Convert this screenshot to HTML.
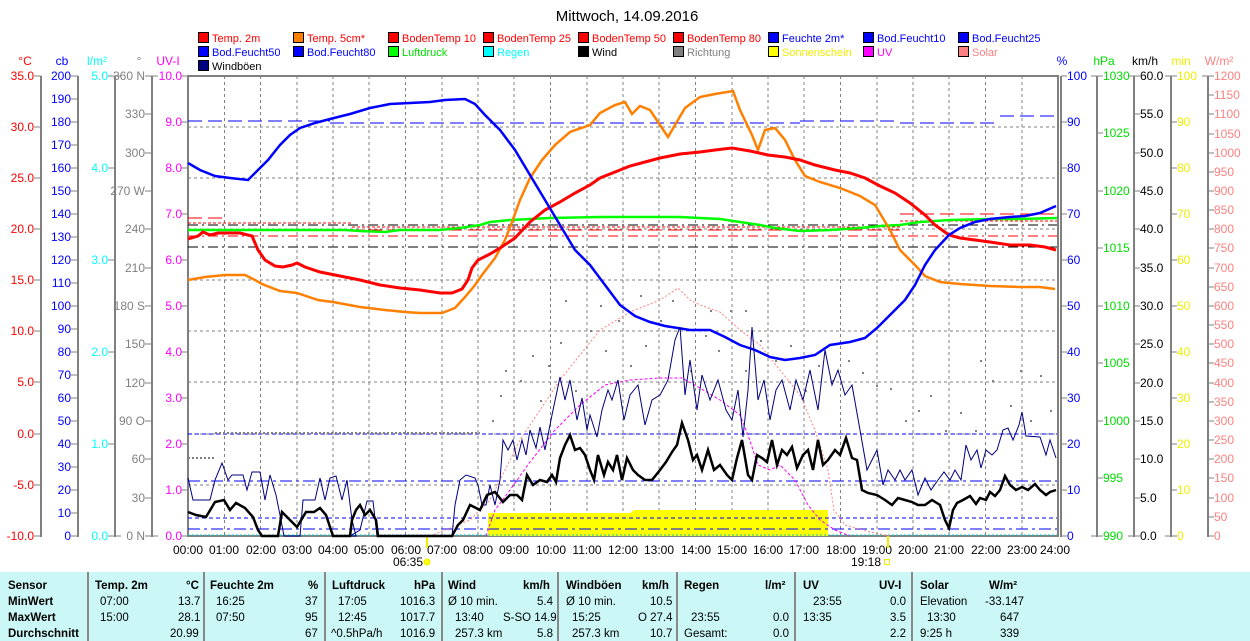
<!DOCTYPE html>
<html><head><meta charset="utf-8"><style>
html,body{margin:0;padding:0;background:#fff;width:1250px;height:641px;overflow:hidden}
svg{display:block}
text{font-family:"Liberation Sans",sans-serif;font-size:12px}
.lg text{font-size:11px}
.tb{position:absolute;left:0;top:572px;width:1250px;height:69px;background:#ccf7f7;font-family:"Liberation Sans Narrow","Liberation Sans",sans-serif;font-size:11.5px;color:#000}
.tb div{position:absolute;white-space:nowrap}
.b{font-weight:bold}
.sep{width:2px;background:#888;top:0;height:69px}
</style></head><body>
<svg width="1250" height="572" viewBox="0 0 1250 572" style="position:absolute;left:0;top:0">
<text x="627" y="21" font-size="15" text-anchor="middle" style="font-size:15px">Mittwoch, 14.09.2016</text>
<!-- legend -->
<g stroke="#000" stroke-width="1">
<rect x="198.5" y="32.5" width="10" height="10" fill="#f00"/><rect x="293.5" y="32.5" width="10" height="10" fill="#ff8000"/><rect x="388.5" y="32.5" width="10" height="10" fill="#f00"/><rect x="483.5" y="32.5" width="10" height="10" fill="#f00"/><rect x="578.5" y="32.5" width="10" height="10" fill="#f00"/><rect x="673.5" y="32.5" width="10" height="10" fill="#f00"/><rect x="768.5" y="32.5" width="10" height="10" fill="#00f"/><rect x="863.5" y="32.5" width="10" height="10" fill="#00f"/><rect x="958.5" y="32.5" width="10" height="10" fill="#00f"/>
<rect x="198.5" y="46.5" width="10" height="10" fill="#00f"/><rect x="293.5" y="46.5" width="10" height="10" fill="#00f"/><rect x="388.5" y="46.5" width="10" height="10" fill="#0f0"/><rect x="483.5" y="46.5" width="10" height="10" fill="#0ff"/><rect x="578.5" y="46.5" width="10" height="10" fill="#000"/><rect x="673.5" y="46.5" width="10" height="10" fill="#808080"/><rect x="768.5" y="46.5" width="10" height="10" fill="#ff0"/><rect x="863.5" y="46.5" width="10" height="10" fill="#f0f"/><rect x="958.5" y="46.5" width="10" height="10" fill="#ff8080"/>
<rect x="198.5" y="60.5" width="10" height="10" fill="#000080"/>
</g>
<g class="lg">
<text x="212" y="42" fill="#f00">Temp. 2m</text><text x="307" y="42" fill="#f00">Temp. 5cm*</text><text x="402" y="42" fill="#f00">BodenTemp 10</text><text x="497" y="42" fill="#f00">BodenTemp 25</text><text x="592" y="42" fill="#f00">BodenTemp 50</text><text x="687" y="42" fill="#f00">BodenTemp 80</text><text x="782" y="42" fill="#00f">Feuchte 2m*</text><text x="877" y="42" fill="#00f">Bod.Feucht10</text><text x="972" y="42" fill="#00f">Bod.Feucht25</text>
<text x="212" y="56" fill="#00f">Bod.Feucht50</text><text x="307" y="56" fill="#00f">Bod.Feucht80</text><text x="402" y="56" fill="#0d0">Luftdruck</text><text x="497" y="56" fill="#0ff">Regen</text><text x="592" y="56" fill="#000">Wind</text><text x="687" y="56" fill="#808080">Richtung</text><text x="782" y="56" fill="#ee0">Sonnenschein</text><text x="877" y="56" fill="#f0f">UV</text><text x="972" y="56" fill="#ff8080">Solar</text>
<text x="212" y="70" fill="#000">Windböen</text>
</g>
<!-- axis headers -->
<text x="25" y="65" fill="#f00" text-anchor="middle">°C</text>
<text x="62" y="65" fill="#00f" text-anchor="middle">cb</text>
<text x="97" y="65" fill="#0ff" text-anchor="middle">l/m²</text>
<text x="139" y="65" fill="#808080" text-anchor="middle">°</text>
<text x="168" y="65" fill="#f0f" text-anchor="middle">UV-I</text>
<text x="1062" y="65" fill="#00f" text-anchor="middle">%</text>
<text x="1104" y="65" fill="#0d0" text-anchor="middle">hPa</text>
<text x="1145" y="65" fill="#000" text-anchor="middle">km/h</text>
<text x="1181" y="65" fill="#ee0" text-anchor="middle">min</text>
<text x="1219" y="65" fill="#ff8080" text-anchor="middle">W/m²</text>
<!-- axis lines -->
<g stroke="#808080" stroke-width="2">
<line x1="41" y1="76" x2="41" y2="537"/><line x1="78" y1="76" x2="78" y2="537"/><line x1="115" y1="76" x2="115" y2="537"/><line x1="152" y1="76" x2="152" y2="537"/>
<line x1="1097" y1="76" x2="1097" y2="537"/><line x1="1134" y1="76" x2="1134" y2="537"/><line x1="1171" y1="76" x2="1171" y2="537"/><line x1="1208" y1="76" x2="1208" y2="537"/>
</g>
<!-- grid -->
<g stroke="#808080" stroke-width="1" stroke-dasharray="3,3">
<line x1="224.5" y1="76" x2="224.5" y2="536"/><line x1="260.5" y1="76" x2="260.5" y2="536"/><line x1="297" y1="76" x2="297" y2="536"/><line x1="333" y1="76" x2="333" y2="536"/><line x1="369" y1="76" x2="369" y2="536"/><line x1="405.5" y1="76" x2="405.5" y2="536"/><line x1="442" y1="76" x2="442" y2="536"/><line x1="478" y1="76" x2="478" y2="536"/><line x1="514" y1="76" x2="514" y2="536"/><line x1="550.5" y1="76" x2="550.5" y2="536"/><line x1="587" y1="76" x2="587" y2="536"/><line x1="623" y1="76" x2="623" y2="536"/><line x1="659" y1="76" x2="659" y2="536"/><line x1="695.5" y1="76" x2="695.5" y2="536"/><line x1="732" y1="76" x2="732" y2="536"/><line x1="768" y1="76" x2="768" y2="536"/><line x1="804" y1="76" x2="804" y2="536"/><line x1="840.5" y1="76" x2="840.5" y2="536"/><line x1="877" y1="76" x2="877" y2="536"/><line x1="913" y1="76" x2="913" y2="536"/><line x1="949" y1="76" x2="949" y2="536"/><line x1="985.5" y1="76" x2="985.5" y2="536"/><line x1="1022" y1="76" x2="1022" y2="536"/>
<line x1="188" y1="127" x2="1057" y2="127"/><line x1="188" y1="178" x2="1057" y2="178"/><line x1="188" y1="229" x2="1057" y2="229"/><line x1="188" y1="280" x2="1057" y2="280"/><line x1="188" y1="331" x2="1057" y2="331"/><line x1="188" y1="382" x2="1057" y2="382"/><line x1="188" y1="434" x2="1057" y2="434"/><line x1="188" y1="485" x2="1057" y2="485"/>
</g>
<!-- plot border -->
<rect x="188" y="76" width="870" height="460" fill="none" stroke="#808080" stroke-width="2"/>
<line x1="1061" y1="76" x2="1061" y2="537" stroke="#808080" stroke-width="2"/>
<!-- ticks -->
<g stroke="#808080" stroke-width="1">
<path d="M34 76H41M34 127H41M34 178H41M34 229H41M34 280H41M34 331H41M34 382H41M34 434H41M34 485H41M34 536H41"/>
<path d="M71 76H78M71 99H78M71 122H78M71 145H78M71 168H78M71 191H78M71 214H78M71 237H78M71 260H78M71 283H78M71 306H78M71 329H78M71 352H78M71 375H78M71 398H78M71 421H78M71 444H78M71 467H78M71 490H78M71 513H78M71 536H78"/>
<path d="M108 76H121M108 168H115M108 260H115M108 352H115M108 444H115M108 536H121"/>
<path d="M145 76H158M145 114H152M145 153H152M145 191H152M145 229H152M145 268H152M145 306H152M145 344H152M145 383H152M145 421H152M145 459H152M145 498H152M145 536H158"/>
<path d="M181 76H188M181 122H188M181 168H188M181 214H188M181 260H188M181 306H188M181 352H188M181 398H188M181 444H188M181 490H188M181 536H188"/>
<path d="M1061 76H1067M1061 122H1067M1061 168H1067M1061 214H1067M1061 260H1067M1061 306H1067M1061 352H1067M1061 398H1067M1061 444H1067M1061 490H1067M1061 536H1067"/>
<path d="M1091 76H1103M1097 133H1103M1097 191H1103M1097 248H1103M1097 306H1103M1097 363H1103M1097 421H1103M1097 478H1103M1091 536H1103"/>
<path d="M1128 76H1140M1134 114H1140M1134 153H1140M1134 191H1140M1134 229H1140M1134 268H1140M1134 306H1140M1134 344H1140M1134 383H1140M1134 421H1140M1134 459H1140M1134 498H1140M1128 536H1140"/>
<path d="M1165 76H1177M1171 122H1177M1171 168H1177M1171 214H1177M1171 260H1177M1171 306H1177M1171 352H1177M1171 398H1177M1171 444H1177M1171 490H1177M1165 536H1177"/>
<path d="M1202 76H1214M1208 95H1214M1208 114H1214M1208 134H1214M1208 153H1214M1208 172H1214M1208 191H1214M1208 210H1214M1208 229H1214M1208 248H1214M1208 268H1214M1208 287H1214M1208 306H1214M1208 325H1214M1208 344H1214M1208 363H1214M1208 383H1214M1208 402H1214M1208 421H1214M1208 440H1214M1208 459H1214M1208 478H1214M1208 498H1214M1208 517H1214M1208 536H1214"/>
</g>
<g fill="#f00" text-anchor="end"><text x="34" y="80">35.0</text><text x="34" y="131">30.0</text><text x="34" y="182">25.0</text><text x="34" y="233">20.0</text><text x="34" y="284">15.0</text><text x="34" y="335">10.0</text><text x="34" y="386">5.0</text><text x="34" y="438">0.0</text><text x="34" y="489">-5.0</text><text x="34" y="540">-10.0</text></g>
<g fill="#00f" text-anchor="end"><text x="71" y="80">200</text><text x="71" y="103">190</text><text x="71" y="126">180</text><text x="71" y="149">170</text><text x="71" y="172">160</text><text x="71" y="195">150</text><text x="71" y="218">140</text><text x="71" y="241">130</text><text x="71" y="264">120</text><text x="71" y="287">110</text><text x="71" y="310">100</text><text x="71" y="333">90</text><text x="71" y="356">80</text><text x="71" y="379">70</text><text x="71" y="402">60</text><text x="71" y="425">50</text><text x="71" y="448">40</text><text x="71" y="471">30</text><text x="71" y="494">20</text><text x="71" y="517">10</text><text x="71" y="540">0</text></g>
<g fill="#0ff" text-anchor="end"><text x="108" y="80">5.0</text><text x="108" y="172">4.0</text><text x="108" y="264">3.0</text><text x="108" y="356">2.0</text><text x="108" y="448">1.0</text><text x="108" y="540">0.0</text></g>
<g fill="#808080" text-anchor="end"><text x="145" y="80">360 N</text><text x="145" y="118">330</text><text x="145" y="157">300</text><text x="145" y="195">270 W</text><text x="145" y="233">240</text><text x="145" y="272">210</text><text x="145" y="310">180 S</text><text x="145" y="348">150</text><text x="145" y="387">120</text><text x="145" y="425">90  O</text><text x="145" y="463">60</text><text x="145" y="502">30</text><text x="145" y="540">0  N</text></g>
<g fill="#f0f" text-anchor="end"><text x="182" y="80">10.0</text><text x="182" y="126">9.0</text><text x="182" y="172">8.0</text><text x="182" y="218">7.0</text><text x="182" y="264">6.0</text><text x="182" y="310">5.0</text><text x="182" y="356">4.0</text><text x="182" y="402">3.0</text><text x="182" y="448">2.0</text><text x="182" y="494">1.0</text><text x="182" y="540">0.0</text></g>
<g fill="#00f"><text x="1067" y="80">100</text><text x="1067" y="126">90</text><text x="1067" y="172">80</text><text x="1067" y="218">70</text><text x="1067" y="264">60</text><text x="1067" y="310">50</text><text x="1067" y="356">40</text><text x="1067" y="402">30</text><text x="1067" y="448">20</text><text x="1067" y="494">10</text><text x="1067" y="540">0</text></g>
<g fill="#0d0"><text x="1103" y="80">1030</text><text x="1103" y="137">1025</text><text x="1103" y="195">1020</text><text x="1103" y="252">1015</text><text x="1103" y="310">1010</text><text x="1103" y="367">1005</text><text x="1103" y="425">1000</text><text x="1103" y="482">995</text><text x="1103" y="540">990</text></g>
<g fill="#000"><text x="1140" y="80">60.0</text><text x="1140" y="118">55.0</text><text x="1140" y="157">50.0</text><text x="1140" y="195">45.0</text><text x="1140" y="233">40.0</text><text x="1140" y="272">35.0</text><text x="1140" y="310">30.0</text><text x="1140" y="348">25.0</text><text x="1140" y="387">20.0</text><text x="1140" y="425">15.0</text><text x="1140" y="463">10.0</text><text x="1140" y="502">5.0</text><text x="1140" y="540">0.0</text></g>
<g fill="#ee0"><text x="1177" y="80">100</text><text x="1177" y="126">90</text><text x="1177" y="172">80</text><text x="1177" y="218">70</text><text x="1177" y="264">60</text><text x="1177" y="310">50</text><text x="1177" y="356">40</text><text x="1177" y="402">30</text><text x="1177" y="448">20</text><text x="1177" y="494">10</text><text x="1177" y="540">0</text></g>
<g fill="#ff8080" font-size="11" style="font-size:11px"><text x="1214" y="80">1200</text><text x="1214" y="99">1150</text><text x="1214" y="118">1100</text><text x="1214" y="138">1050</text><text x="1214" y="157">1000</text><text x="1214" y="176">950</text><text x="1214" y="195">900</text><text x="1214" y="214">850</text><text x="1214" y="233">800</text><text x="1214" y="252">750</text><text x="1214" y="272">700</text><text x="1214" y="291">650</text><text x="1214" y="310">600</text><text x="1214" y="329">550</text><text x="1214" y="348">500</text><text x="1214" y="367">450</text><text x="1214" y="387">400</text><text x="1214" y="406">350</text><text x="1214" y="425">300</text><text x="1214" y="444">250</text><text x="1214" y="463">200</text><text x="1214" y="482">150</text><text x="1214" y="502">100</text><text x="1214" y="521">50</text><text x="1214" y="540">0</text></g>
<!-- x labels -->
<g fill="#000" text-anchor="middle"><text x="188" y="554">00:00</text><text x="224" y="554">01:00</text><text x="261" y="554">02:00</text><text x="297" y="554">03:00</text><text x="333" y="554">04:00</text><text x="369" y="554">05:00</text><text x="406" y="554">06:00</text><text x="442" y="554">07:00</text><text x="478" y="554">08:00</text><text x="514" y="554">09:00</text><text x="551" y="554">10:00</text><text x="587" y="554">11:00</text><text x="623" y="554">12:00</text><text x="659" y="554">13:00</text><text x="696" y="554">14:00</text><text x="732" y="554">15:00</text><text x="768" y="554">16:00</text><text x="804" y="554">17:00</text><text x="841" y="554">18:00</text><text x="877" y="554">19:00</text><text x="913" y="554">20:00</text><text x="949" y="554">21:00</text><text x="986" y="554">22:00</text><text x="1022" y="554">23:00</text><text x="1055" y="554">24:00</text>
<text x="408" y="566">06:35</text><text x="866" y="566">19:18</text></g>
<circle cx="427" cy="562" r="3" fill="#ff0" stroke="#ee0"/>
<rect x="884.5" y="559.5" width="5" height="5" fill="none" stroke="#ee0"/>
<line x1="427" y1="536" x2="427" y2="548" stroke="#ee0" stroke-width="2"/>
<line x1="888" y1="536" x2="888" y2="548" stroke="#ee0" stroke-width="2"/>
<polygon points="488,513 630,513 634,510 828,510 828,536 488,536" fill="#ff0"/>
<g fill="none" stroke-width="1">
<path d="M188 121H330M330 123H800M800 121H900M900 123H1000M1000 116H1057" stroke="#00f" stroke-dasharray="14,6"/>
<path d="M188 218H228M228 230H900M900 214H1057" stroke="#f00" stroke-dasharray="14,6"/>
<path d="M188 223H352M352 227H900M900 221H1057" stroke="#f00" stroke-dasharray="3,2"/>
<path d="M188 225H1057" stroke="#000" stroke-dasharray="10,4,2,4"/>
<path d="M188 236H1057" stroke="#f00" stroke-dasharray="10,4,2,4"/>
<path d="M188 247H1057" stroke="#000" stroke-dasharray="10,4,2,4"/>
<path d="M188 434H1057" stroke="#00f" stroke-dasharray="4,3"/>
<path d="M215 433H480" stroke="#808080" stroke-dasharray="2,2" stroke-width="2"/>
<path d="M188 458H215" stroke="#808080" stroke-dasharray="2,2" stroke-width="2"/>
<path d="M188 481H1057" stroke="#00f" stroke-dasharray="12,4,3,4"/>
<path d="M188 518H1057" stroke="#00f" stroke-dasharray="4,3"/>
<path d="M188 529H1057" stroke="#00f" stroke-dasharray="12,4,3,4"/>
<path d="M188 535H1057" stroke="#0cc" stroke-dasharray="2,2"/>
</g>
<g fill="#808080">
<rect x="505" y="370" width="2" height="2"/><rect x="520" y="380" width="2" height="2"/><rect x="532" y="355" width="2" height="2"/><rect x="548" y="365" width="2" height="2"/><rect x="560" y="342" width="2" height="2"/><rect x="575" y="390" width="2" height="2"/><rect x="590" y="330" width="2" height="2"/><rect x="605" y="350" width="2" height="2"/><rect x="618" y="320" width="2" height="2"/><rect x="630" y="365" width="2" height="2"/><rect x="645" y="345" width="2" height="2"/><rect x="660" y="320" width="2" height="2"/><rect x="672" y="300" width="2" height="2"/><rect x="690" y="370" width="2" height="2"/><rect x="705" y="335" width="2" height="2"/><rect x="718" y="350" width="2" height="2"/><rect x="730" y="310" width="2" height="2"/><rect x="745" y="370" width="2" height="2"/><rect x="760" y="340" width="2" height="2"/><rect x="775" y="360" width="2" height="2"/><rect x="790" y="345" width="2" height="2"/><rect x="805" y="390" width="2" height="2"/><rect x="818" y="365" width="2" height="2"/><rect x="832" y="380" width="2" height="2"/><rect x="848" y="360" width="2" height="2"/><rect x="862" y="372" width="2" height="2"/><rect x="876" y="385" width="2" height="2"/><rect x="890" y="388" width="2" height="2"/><rect x="905" y="420" width="2" height="2"/><rect x="918" y="410" width="2" height="2"/><rect x="930" y="395" width="2" height="2"/><rect x="945" y="430" width="2" height="2"/><rect x="960" y="412" width="2" height="2"/><rect x="975" y="430" width="2" height="2"/><rect x="992" y="380" width="2" height="2"/><rect x="1010" y="405" width="2" height="2"/><rect x="1030" y="420" width="2" height="2"/><rect x="1040" y="375" width="2" height="2"/><rect x="1050" y="410" width="2" height="2"/><rect x="492" y="420" width="2" height="2"/><rect x="500" y="395" width="2" height="2"/><rect x="540" y="400" width="2" height="2"/><rect x="565" y="300" width="2" height="2"/><rect x="600" y="305" width="2" height="2"/><rect x="640" y="295" width="2" height="2"/><rect x="710" y="310" width="2" height="2"/><rect x="745" y="310" width="2" height="2"/><rect x="980" y="360" width="2" height="2"/><rect x="1020" y="370" width="2" height="2"/>
</g>
<polyline fill="none" stroke="#ff8080" stroke-width="1" stroke-dasharray="2,2" points="430,536 470,520 490,500 520,440 560,380 600,330 630,312 660,300 678,288 690,300 700,305 720,312 740,330 760,345 780,370 800,395 815,430 828,470 834,510 845,525 870,532 890,536"/>
<polyline fill="none" stroke="#f0f" stroke-width="1" stroke-dasharray="3,2" points="486,536 495,510 510,490 530,462 555,430 580,405 605,385 630,380 660,378 682,378 700,388 720,400 740,415 748,435 758,465 770,470 780,465 795,480 808,505 820,520 835,530 850,536"/>
<polyline fill="none" stroke="#0f0" stroke-width="2.5" points="188,230 250,230 300,230 345,230 360,231 385,232 400,230 440,230 460,228 480,225 490,222 510,220 550,218 600,217 640,217 680,217 720,219 740,222 760,225 775,228 800,231 830,230 860,228 880,226 900,225 920,222 950,220 990,219 1020,219 1057,218"/>
<polyline fill="none" stroke="#ff8000" stroke-width="2.5" points="188,280 205,277 225,275 245,275 255,280 262,284 280,291 297,293 318,300 333,302 360,307 385,310 405,312 420,313 442,313 455,308 465,297 475,285 482,275 495,258 505,240 512,222 520,200 530,178 542,160 555,145 570,132 590,125 600,113 615,105 625,102 632,114 640,106 650,110 660,125 668,137 675,125 685,108 700,97 715,94 733,91 740,110 752,135 758,150 765,130 775,128 785,140 795,160 805,176 820,182 840,188 860,196 875,205 890,230 900,250 915,265 925,276 940,282 960,284 990,286 1020,287 1040,287 1055,289"/>
<polyline fill="none" stroke="#f00" stroke-width="3" points="188,239 198,236 203,232 210,235 218,233 240,233 252,236 258,250 265,260 275,266 283,267 292,265 297,263 305,267 320,272 340,276 360,280 380,285 400,288 420,290 440,293 452,293 462,289 468,280 472,268 478,260 490,254 500,248 515,238 530,222 545,210 560,202 575,193 590,185 600,178 615,172 630,166 645,162 660,158 680,154 700,152 715,150 732,148 750,151 768,155 785,157 800,160 815,165 835,170 850,173 865,178 880,186 895,193 910,203 925,215 935,225 949,235 960,238 975,240 990,242 1010,245 1030,245 1045,247 1056,250"/>
<polyline fill="none" stroke="#00f" stroke-width="2.5" points="188,163 200,170 215,176 230,178 248,180 258,170 268,160 280,145 290,135 300,128 315,123 330,119 350,114 370,108 390,104 410,103 430,102 445,100 465,99 475,104 485,115 500,130 515,150 530,175 545,200 560,225 575,250 590,265 605,285 620,305 635,316 650,322 665,326 690,330 710,330 725,337 740,345 755,350 770,357 785,360 800,358 815,355 830,345 850,342 865,338 877,328 890,315 905,300 915,285 925,265 935,250 949,235 960,228 975,222 990,219 1010,217 1025,216 1040,213 1056,206"/>
<polyline fill="none" stroke="#000080" stroke-width="1" points="188,478 193,500 210,500 215,480 222,463 228,480 232,475 238,475 243,475 247,490 252,472 260,472 265,500 270,475 276,495 280,515 284,536 300,536 303,500 315,500 320,478 325,500 330,478 336,476 342,500 347,480 352,520 356,536 350,536 360,530 367,501 373,501 377,536 452,536 455,505 460,480 466,475 475,478 478,485 482,505 486,505 490,485 495,505 500,480 503,440 508,450 513,440 517,460 522,440 526,455 530,430 536,448 540,427 545,450 552,415 560,377 565,400 570,380 577,420 582,398 587,430 590,415 597,437 602,410 608,390 612,400 618,380 624,420 630,395 638,385 645,425 652,400 660,395 668,380 675,340 680,327 685,395 690,360 697,410 702,375 710,400 718,380 726,410 732,420 738,390 743,437 748,390 752,327 758,400 764,380 770,420 776,390 782,380 790,410 796,380 803,400 810,370 818,410 825,350 832,385 838,370 845,395 852,385 860,430 867,470 872,460 877,450 883,485 888,470 895,480 900,470 905,480 912,470 918,495 925,478 931,490 938,480 944,472 950,480 955,470 961,480 966,445 971,460 977,450 981,468 986,450 992,455 997,450 1003,430 1008,428 1013,440 1019,425 1022,412 1026,436 1040,437 1046,455 1050,440 1056,458"/>
<polyline fill="none" stroke="#000" stroke-width="2.5" points="188,512 196,515 206,517 215,502 224,500 230,510 236,503 245,508 253,517 258,530 262,536 278,536 282,512 290,520 297,527 306,512 314,512 320,508 326,515 333,536 350,536 352,520 356,510 360,505 365,515 370,510 376,520 378,536 452,536 458,525 463,520 470,505 480,510 487,495 495,492 503,502 510,495 517,495 522,500 527,475 533,485 540,480 547,482 552,475 556,482 560,458 565,445 570,435 575,450 580,448 585,455 590,470 594,480 598,455 604,475 608,462 613,470 617,455 622,480 627,458 633,470 638,475 645,480 652,480 660,470 666,462 672,452 677,445 682,423 688,440 693,460 697,455 702,470 708,450 714,470 720,465 727,475 732,480 737,458 742,440 748,475 752,480 757,455 762,458 767,462 772,440 777,465 782,450 787,455 792,447 797,468 803,455 808,450 813,470 818,440 823,465 828,460 835,450 840,455 846,438 852,458 857,460 862,490 868,493 877,495 885,500 892,505 898,498 905,500 912,502 918,505 925,505 932,500 940,505 945,520 949,528 953,510 957,503 963,500 970,496 976,504 980,498 986,500 990,492 995,496 1000,490 1005,476 1010,485 1016,490 1022,487 1028,490 1035,484 1040,490 1046,495 1050,492 1056,490"/>
</svg>
<div class="tb">
<div class="sep" style="left:87px"></div><div class="sep" style="left:203px"></div><div class="sep" style="left:324px"></div><div class="sep" style="left:441px"></div><div class="sep" style="left:557px"></div><div class="sep" style="left:676px"></div><div class="sep" style="left:794px"></div><div class="sep" style="left:911px"></div>
<div class="b" style="left:8px;top:8px">Sensor</div><div class="b" style="left:8px;top:24px">MinWert</div><div class="b" style="left:8px;top:40px">MaxWert</div><div class="b" style="left:8px;top:56px">Durchschnitt</div>
<div class="b" style="left:95px;top:8px">Temp. 2m</div><div class="b" style="left:186px;top:8px">°C</div>
<div style="left:100px;top:24px">07:00</div><div style="left:178px;top:24px">13.7</div>
<div style="left:100px;top:40px">15:00</div><div style="left:178px;top:40px">28.1</div>
<div style="left:170px;top:56px">20.99</div>
<div class="b" style="left:210px;top:8px">Feuchte 2m</div><div class="b" style="left:308px;top:8px">%</div>
<div style="left:216px;top:24px">16:25</div><div style="left:305px;top:24px">37</div>
<div style="left:216px;top:40px">07:50</div><div style="left:305px;top:40px">95</div>
<div style="left:305px;top:56px">67</div>
<div class="b" style="left:332px;top:8px">Luftdruck</div><div class="b" style="left:414px;top:8px">hPa</div>
<div style="left:338px;top:24px">17:05</div><div style="left:400px;top:24px">1016.3</div>
<div style="left:338px;top:40px">12:45</div><div style="left:400px;top:40px">1017.7</div>
<div style="left:331px;top:56px">^0.5hPa/h</div><div style="left:400px;top:56px">1016.9</div>
<div class="b" style="left:448px;top:8px">Wind</div><div class="b" style="left:523px;top:8px">km/h</div>
<div style="left:448px;top:24px">Ø 10 min.</div><div style="left:537px;top:24px">5.4</div>
<div style="left:455px;top:40px">13:40</div><div style="left:503px;top:40px">S-SO 14.9</div>
<div style="left:455px;top:56px">257.3 km</div><div style="left:537px;top:56px">5.8</div>
<div class="b" style="left:566px;top:8px">Windböen</div><div class="b" style="left:642px;top:8px">km/h</div>
<div style="left:566px;top:24px">Ø 10 min.</div><div style="left:650px;top:24px">10.5</div>
<div style="left:572px;top:40px">15:25</div><div style="left:638px;top:40px">O 27.4</div>
<div style="left:572px;top:56px">257.3 km</div><div style="left:650px;top:56px">10.7</div>
<div class="b" style="left:684px;top:8px">Regen</div><div class="b" style="left:765px;top:8px">l/m²</div>
<div style="left:691px;top:40px">23:55</div><div style="left:773px;top:40px">0.0</div>
<div style="left:684px;top:56px">Gesamt:</div><div style="left:773px;top:56px">0.0</div>
<div class="b" style="left:803px;top:8px">UV</div><div class="b" style="left:879px;top:8px">UV-I</div>
<div style="left:813px;top:24px">23:55</div><div style="left:890px;top:24px">0.0</div>
<div style="left:803px;top:40px">13:35</div><div style="left:890px;top:40px">3.5</div>
<div style="left:890px;top:56px">2.2</div>
<div class="b" style="left:920px;top:8px">Solar</div><div class="b" style="left:989px;top:8px">W/m²</div>
<div style="left:920px;top:24px">Elevation</div><div style="left:985px;top:24px">-33.147</div>
<div style="left:927px;top:40px">13:30</div><div style="left:1000px;top:40px">647</div>
<div style="left:920px;top:56px">9:25 h</div><div style="left:1000px;top:56px">339</div>
</div>
</body></html>
